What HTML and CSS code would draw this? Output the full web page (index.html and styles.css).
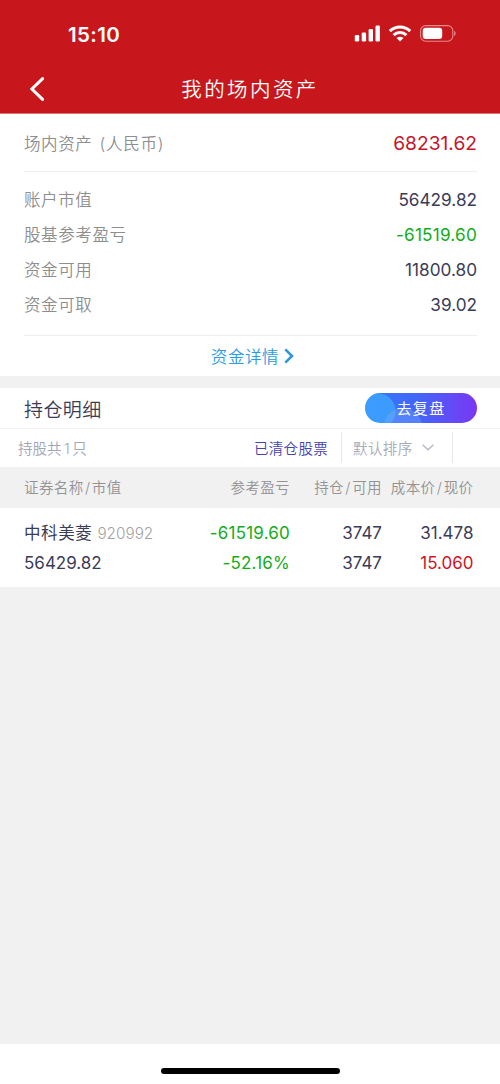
FILE: index.html
```html
<!DOCTYPE html>
<html lang="zh-CN">
<head>
<meta charset="utf-8">
<meta name="viewport" content="width=device-width, initial-scale=1">
<title>我的场内资产</title>
<link rel="stylesheet" href="styles.css">
</head>
<body>
<header class="header">
  <div class="status">
    <span class="time">15:10</span>
    <div class="status-icons">
      <svg width="26" height="17" viewBox="0 0 26 17" fill="#fff">
        <rect x="0.8" y="10" width="4.4" height="6.4" rx="1.2"/>
        <rect x="7.7" y="7.5" width="4.4" height="8.9" rx="1.2"/>
        <rect x="14.6" y="4" width="4.4" height="12.4" rx="1.2"/>
        <rect x="21.5" y="0.5" width="4.4" height="15.9" rx="1.2"/>
      </svg>
      <svg class="wifi" width="24" height="17" viewBox="0 0 24 17">
        <g fill="none" stroke="#fff" stroke-width="3">
          <path d="M1.8 6.2C7.6.7 16.4.7 22.2 6.2"/>
          <path d="M5.6 10.1c3.7-3.4 9.1-3.4 12.8 0"/>
        </g>
        <path d="M8.5 12.9c2-1.7 5-1.7 7 0L12 16.5z" fill="#fff"/>
      </svg>
      <svg class="battery" width="36" height="17" viewBox="0 0 36 17">
        <rect x="0.6" y="0.6" width="32.2" height="15.6" rx="5" fill="none" stroke="#e58a8b" stroke-width="1.1"/>
        <rect x="2.7" y="2.7" width="19.5" height="11.4" rx="3" fill="#fff"/>
        <path d="M34.2 5.8c1.9.8 1.9 4.4 0 5.2z" fill="#e58a8b"/>
      </svg>
    </div>
  </div>
  <div class="nav">
    <svg class="back" width="16" height="26" viewBox="0 0 16 26"><path d="M13.6 2.6 2.9 13l10.7 10.4" fill="none" stroke="#fff" stroke-width="3" stroke-linecap="round"/></svg>
    <h1 class="title">我的场内资产</h1>
  </div>
</header>

<section class="assets">
  <div class="row total"><span class="label">场内资产<span class="unit">(人民币)</span></span><span class="num">68231.62</span></div>
  <div class="detail">
    <div class="row"><span class="label">账户市值</span><span class="num">56429.82</span></div>
    <div class="row"><span class="label">股基参考盈亏</span><span class="num green">-61519.60</span></div>
    <div class="row"><span class="label">资金可用</span><span class="num">11800.80</span></div>
    <div class="row"><span class="label">资金可取</span><span class="num">39.02</span></div>
  </div>
  <a class="more">资金详情
    <svg width="10" height="16" viewBox="0 0 10 16"><path d="M1.3 1.4 8 8l-6.7 6.6" fill="none" stroke="#2c96db" stroke-width="2.5"/></svg>
  </a>
</section>

<section class="holdings">
  <div class="holdings-head">
    <h2>持仓明细</h2>
    <a class="review"><span>去复盘</span></a>
  </div>
  <div class="filter">
    <span class="count">持股共<span class="one">1</span>只</span>
    <a class="cleared">已清仓股票</a>
    <div class="sort">默认排序
      <svg width="12" height="7" viewBox="0 0 12 7"><path d="M.6.7 6 5.8 11.4.7" fill="none" stroke="#b3b7c6" stroke-width="1.3"/></svg>
    </div>
  </div>
  <div class="cols thead">
    <span>证券名称<i>/</i>市值</span><span>参考盈亏</span><span>持仓<i>/</i>可用</span><span>成本价<i>/</i>现价</span>
  </div>
  <div class="stock">
    <div class="cols"><span class="name">中科美菱<span class="code">920992</span></span><span class="green">-61519.60</span><span>3747</span><span>31.478</span></div>
    <div class="cols"><span>56429.82</span><span class="green">-52.16%</span><span>3747</span><span class="red">15.060</span></div>
  </div>
</section>

<footer class="home"><div class="home-bar"></div></footer>
</body>
</html>
```

FILE: styles.css
```css
* {
  box-sizing: border-box;
}

body {
  display: flex;
  flex-direction: column;
  height: 1084px;
  margin: 0;
  background: #f1f1f1;
  color: #3b3c57;
  font-family: Inter, "Noto Sans CJK SC", sans-serif;
  font-size: 17px;
}

h1, h2 {
  margin: 0;
  font-weight: 350;
}

i {
  font-style: normal;
  margin: 0 1.4px;
}

svg {
  display: block;
  flex: none;
}

.header {
  height: 114px;
  background: #c7171c;
  border-bottom: 1px solid #df7074;
  color: #fff;
}

.status {
  display: flex;
  justify-content: space-between;
  height: 62px;
  padding: 7px 44px 0 68px;
}

.time {
  font-size: 20.5px;
  font-weight: 600;
  line-height: 55px;
  letter-spacing: 0.4px;
}

.status-icons {
  display: flex;
  padding-top: 18px;
}

.wifi {
  margin-left: 8px;
}

.battery {
  margin-left: 8px;
}

.nav {
  display: grid;
  grid-template-columns: 100px 1fr 100px;
  align-items: center;
  height: 52px;
}

.back {
  margin: -1px 0 0 29px;
}

.title {
  font-size: 20.5px;
  letter-spacing: 2.4px;
  line-height: 52px;
  padding-top: 2px;
  text-align: center;
}

.assets {
  height: 262px;
  padding: 0 23px 0 24px;
  background: #fff;
}

.row {
  display: flex;
  justify-content: space-between;
  align-items: center;
  height: 35px;
}

.label {
  color: #8e8e8e;
  font-size: 16.5px;
  font-weight: 350;
  letter-spacing: 0.6px;
}

.detail .label {
  padding-bottom: 1px;
}

.unit {
  margin-left: 7px;
  letter-spacing: 0.8px;
}

.num {
  font-size: 17.2px;
}

.total {
  height: 58px;
  border-bottom: 1px solid #eee;
}

.total .num {
  padding-top: 1px;
  color: #c5162a;
  font-size: 19.2px;
}

.detail {
  height: 164px;
  padding-top: 10px;
  border-bottom: 1px solid #eee;
}

.green {
  color: #13ad1b;
  letter-spacing: 0.2px;
}

.red {
  color: #d3121f;
}

.more {
  display: flex;
  justify-content: center;
  align-items: center;
  gap: 5px;
  height: 40px;
  padding-left: 4px;
  color: #2c9be0;
  font-size: 16.5px;
  font-weight: 350;
  letter-spacing: 0.6px;
}

.holdings {
  margin-top: 12px;
  background: #fff;
}

.holdings-head {
  display: flex;
  justify-content: space-between;
  align-items: center;
  height: 40px;
  padding: 0 23px 0 24px;
}

.holdings-head h2 {
  font-size: 19px;
  letter-spacing: 0.4px;
}

.review {
  width: 112px;
  height: 30px;
  border-radius: 15px;
  background:
    radial-gradient(circle at 38px 34px, rgba(120, 170, 255, 0.38) 18.5px, transparent 19.5px),
    radial-gradient(circle at 13px 18px, rgba(62, 168, 255, 0.75) 17px, transparent 18px),
    linear-gradient(90deg, #2f7cfb, #4564f8 50%, #7b36f5);
  color: #fff;
  font-size: 15px;
  letter-spacing: 1.3px;
  line-height: 31px;
  text-align: center;
}

.filter {
  display: flex;
  align-items: center;
  height: 39px;
  padding: 0 47px 2px 18px;
  border-top: 1px solid #f0f0f2;
  font-size: 14.5px;
}

.count {
  flex: 1;
  color: #a0a6b7;
  font-weight: 350;
}

.one {
  margin: 0 2.5px;
}

.cleared {
  margin-right: 13px;
  color: #4543b0;
  font-weight: 350;
  letter-spacing: 0.3px;
}

.sort {
  display: flex;
  align-items: center;
  gap: 9px;
  width: 112px;
  height: 31px;
  padding-left: 11px;
  border: solid #e7e7eb;
  border-width: 0 1px;
  color: #a6aaba;
  font-weight: 350;
  letter-spacing: 0.4px;
}

.cols {
  display: grid;
  grid-template-columns: 174px 92px 92px 91.5px;
  align-items: center;
  height: 30px;
  padding-left: 24px;
  text-align: right;
  white-space: nowrap;
}

.cols > :first-child {
  text-align: left;
}

.thead {
  height: 41px;
  padding-bottom: 2px;
  background: #f1f1f1;
  color: #929292;
  font-size: 14.5px;
  font-weight: 350;
  letter-spacing: 0.4px;
}

.stock {
  height: 79px;
  padding-top: 10px;
}

.name {
  font-size: 16.5px;
  letter-spacing: 0.6px;
  line-height: 28px;
}

.code {
  margin-left: 5px;
  color: #a2a2a2;
  font-size: 15.3px;
  font-weight: 350;
  letter-spacing: 0;
}

.home {
  display: flex;
  justify-content: center;
  height: 40px;
  margin-top: auto;
  padding-top: 24px;
  background: #fff;
}

.home-bar {
  width: 179px;
  height: 6px;
  border-radius: 3px;
  background: #000;
}
```
